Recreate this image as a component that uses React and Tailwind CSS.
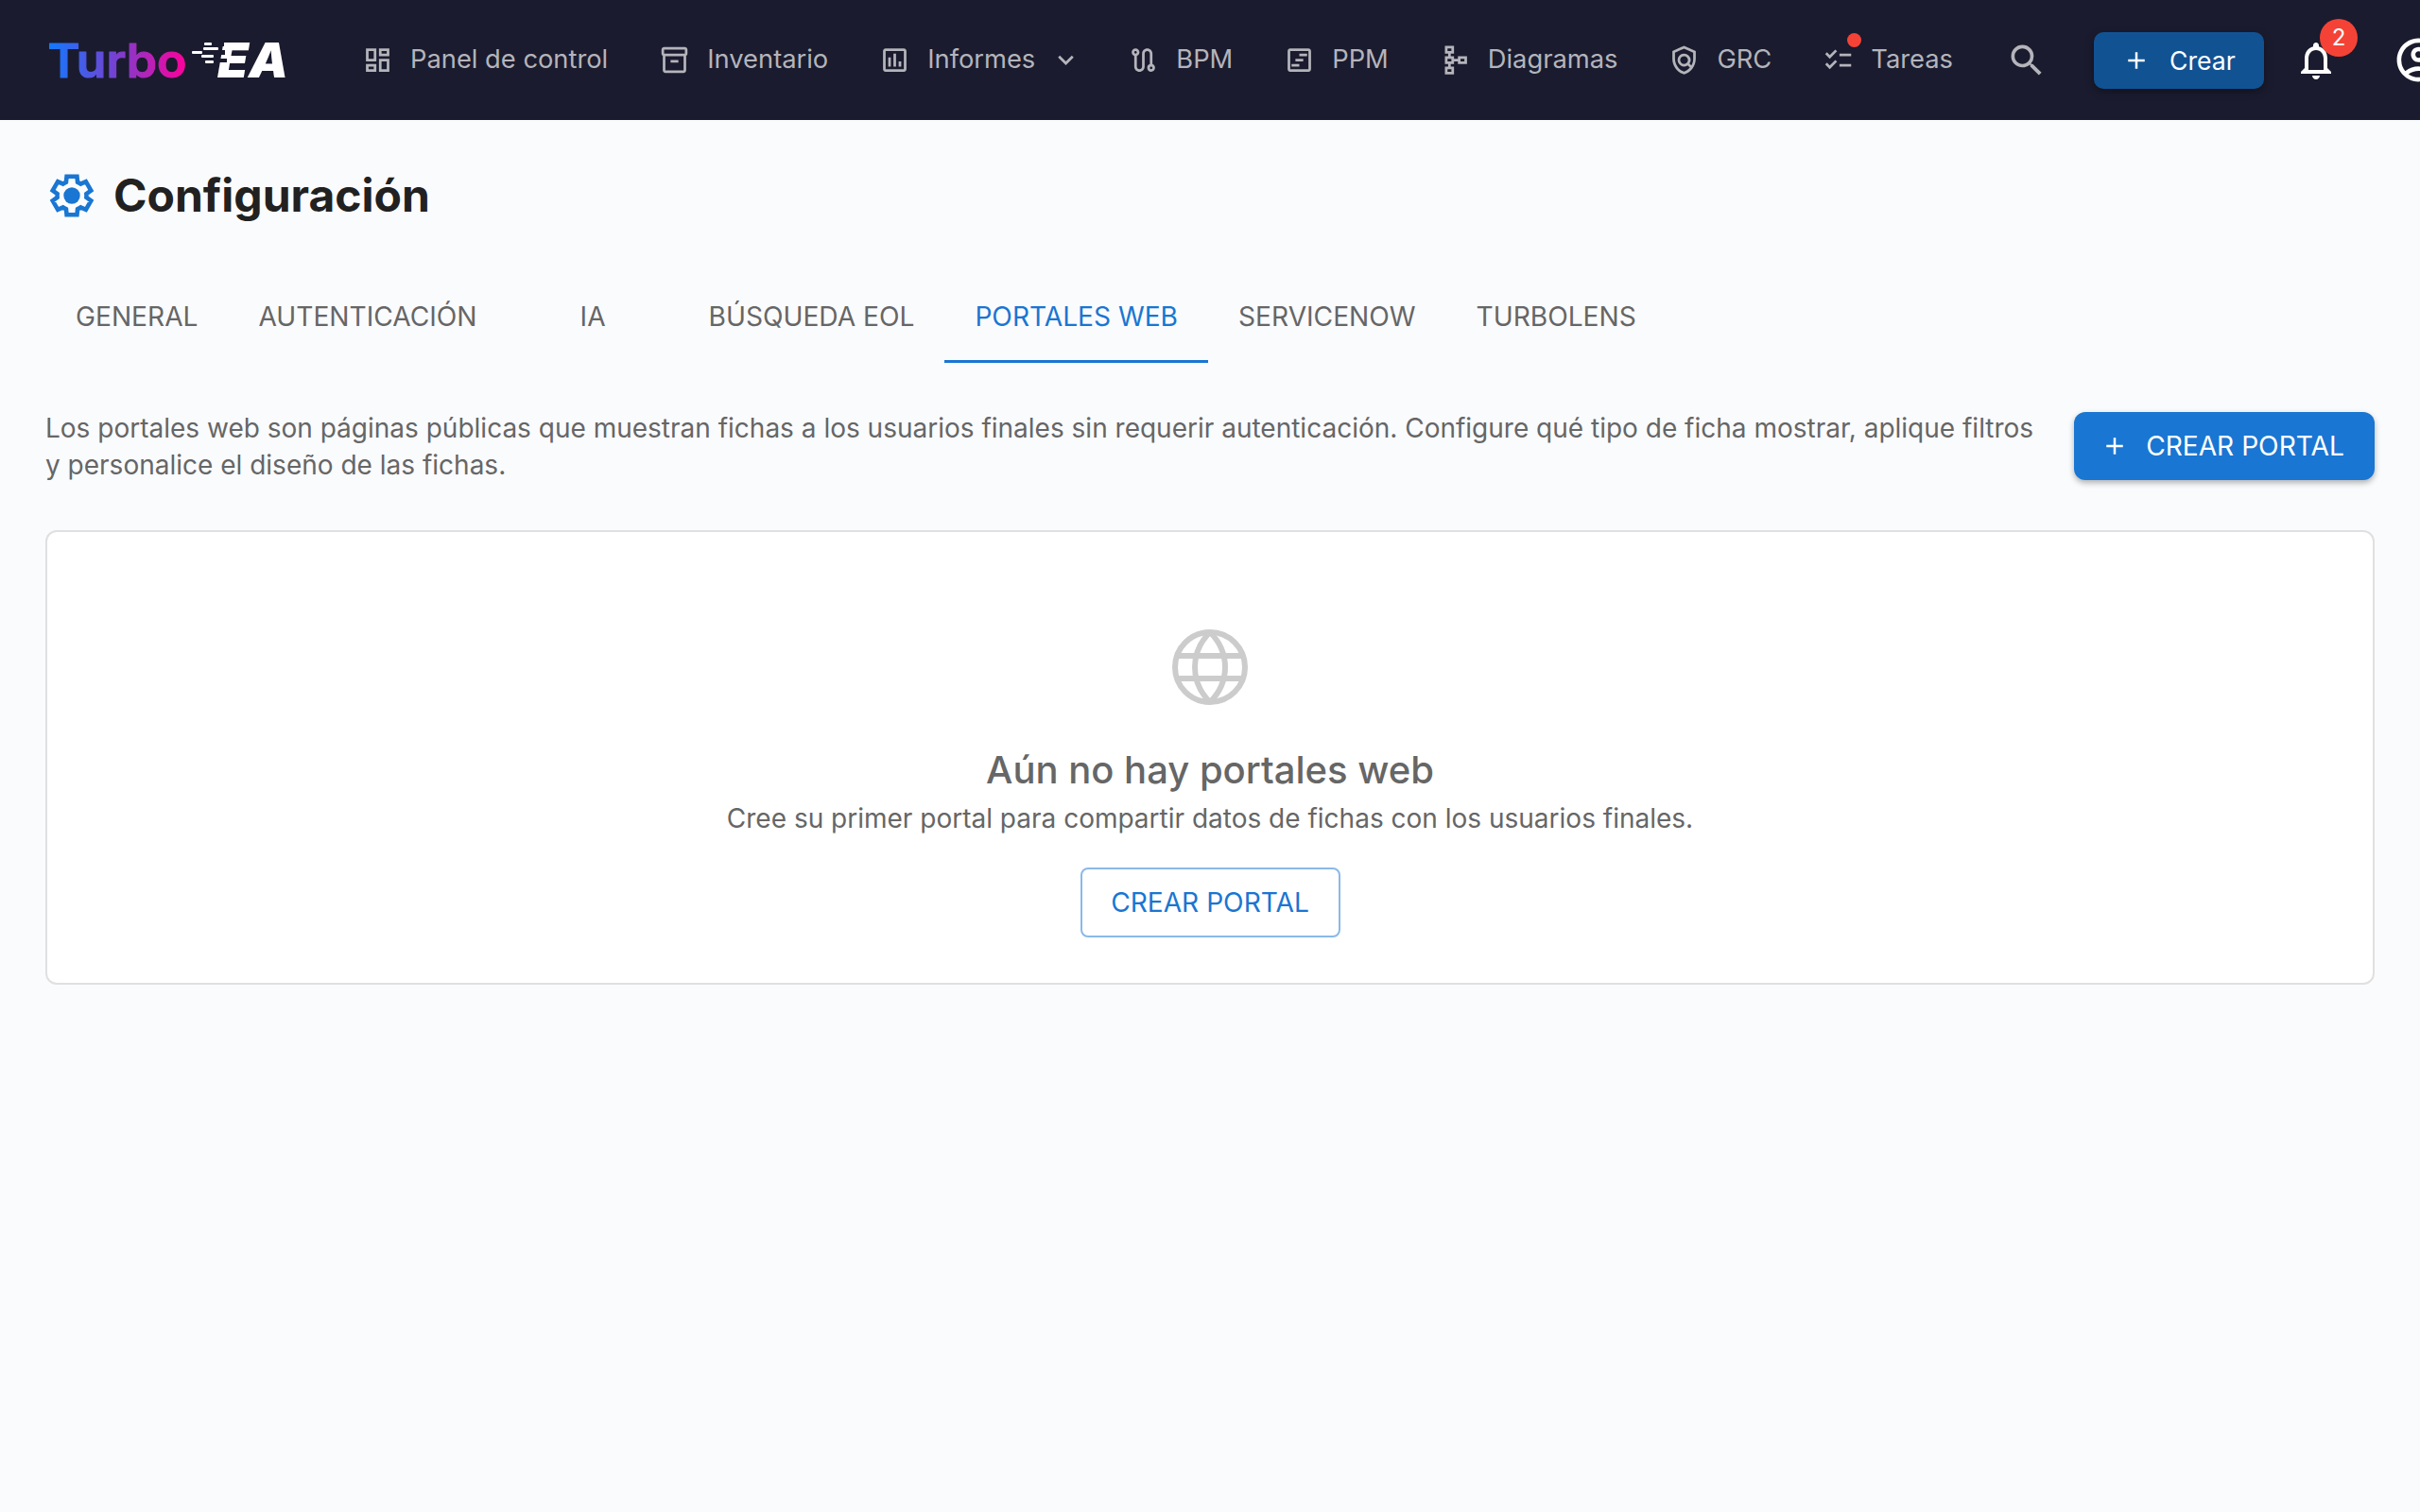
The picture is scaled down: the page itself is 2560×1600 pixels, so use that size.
import { MdOutlineDashboard, MdOutlineInventory2, MdOutlineAssessment, MdExpandMore, MdOutlineRoute, MdOutlineViewTimeline, MdOutlineSchema, MdOutlinePolicy, MdOutlineChecklist, MdSearch, MdAdd, MdOutlineNotifications, MdOutlineAccountCircle } from "react-icons/md";

const NAV_ITEMS = [
  { label: "Panel de control", icon: MdOutlineDashboard },
  { label: "Inventario", icon: MdOutlineInventory2 },
  { label: "Informes", icon: MdOutlineAssessment, caret: true },
  { label: "BPM", icon: MdOutlineRoute },
  { label: "PPM", icon: MdOutlineViewTimeline },
  { label: "Diagramas", icon: MdOutlineSchema },
  { label: "GRC", icon: MdOutlinePolicy },
  { label: "Tareas", icon: MdOutlineChecklist, dot: true },
];

const TABS = ["GENERAL", "AUTENTICACIÓN", "IA", "BÚSQUEDA EOL", "PORTALES WEB", "SERVICENOW", "TURBOLENS"];

const Logo = () => (
  <svg width="270" height="64" viewBox="0 0 270 64" className="shrink-0">
    <defs>
      <linearGradient id="turbo" gradientUnits="userSpaceOnUse" x1="0" x2="148" y1="0" y2="0">
        <stop offset="0" stopColor="#0f7bff" />
        <stop offset="0.5" stopColor="#7a3fd0" />
        <stop offset="1" stopColor="#ff0099" />
      </linearGradient>
    </defs>
    <text x="0.5" y="50" fontFamily="Inter" fontWeight="600" fontSize="50" fill="url(#turbo)" stroke="url(#turbo)" strokeWidth="1.2" strokeLinejoin="round" textLength="147" lengthAdjust="spacingAndGlyphs">Turbo</text>
    <text x="180" y="50" fontFamily="Inter" fontWeight="900" fontStyle="italic" fontSize="51" fill="#fff" textLength="75" lengthAdjust="spacingAndGlyphs">EA</text>
    {/* speed lines cut into the E */}
    <g fill="#1a1b2e">
      <rect x="176" y="12" width="11" height="5" />
      <rect x="176" y="21" width="12" height="5" />
      <rect x="176" y="30" width="14" height="4" />
    </g>
    <g fill="#fff">
      <rect x="153" y="22" width="11" height="3" rx="1" />
      <rect x="166" y="13" width="8" height="3" rx="1" />
      <rect x="165" y="18" width="16" height="3" rx="1" />
      <rect x="163" y="26" width="13" height="3" rx="1" />
      <rect x="167" y="32" width="9" height="3" rx="1" />
    </g>
  </svg>
);

// gear outline with a solid centre, the icon set's one has a ring instead
const gearPoints = [0, 1, 2, 3, 4, 5]
  .flatMap((k) => {
    const a = k * 60 - 90;
    return [
      [15.5, a - 30],
      [15.5, a - 23],
      [21, a - 15],
      [21, a + 15],
      [15.5, a + 23],
    ];
  })
  .map(([r, d]) => {
    const t = (d * Math.PI) / 180;
    return `${(24 + r * Math.cos(t)).toFixed(2)},${(24 + r * Math.sin(t)).toFixed(2)}`;
  })
  .join(" ");

const GearIcon = () => (
  <svg width="48" height="48" viewBox="0 0 48 48" className="shrink-0 ml-[4px]">
    <polygon points={gearPoints} fill="none" stroke="#1976d2" strokeWidth="4.6" />
    <circle cx="24" cy="24" r="8.7" fill="#1976d2" />
  </svg>
);

const GlobeIcon = () => (
  <svg width="80" height="80" viewBox="0 0 80 80" fill="none" stroke="#cccccc" strokeWidth="6" className="mt-[103px] shrink-0">
    <circle cx="40" cy="40" r="37" />
    <path d="M40 3C29 14 24 28 24 40s5 26 16 37M40 3c11 11 16 25 16 37S51 66 40 77" />
    <path d="M6 28h68M6 52h68" />
  </svg>
);

const NavItem = ({ item }) => {
  const Icon = item.icon;
  return (
    <div className="relative flex items-center gap-[18px] shrink-0 text-[27.3px] text-[#b4b4bb]">
      <Icon className="w-[33px] h-[33px] shrink-0" />
      <span className="whitespace-nowrap">{item.label}</span>
      {item.caret && <MdExpandMore className="w-[33px] h-[33px] -ml-[2px] -mr-[5px]" />}
      {item.dot && <span className="absolute left-[26px] top-[-8px] w-[15px] h-[15px] rounded-full bg-[#f44336]" />}
    </div>
  );
};

export default function App() {
  return (
    <div className="w-[2560px] h-[1600px] overflow-hidden bg-[#fafbfd] font-['Inter',sans-serif]">
      <header className="flex items-center h-[127px] bg-[#1a1b2e] pl-[50px] whitespace-nowrap">
        <Logo />
        <nav className="flex items-center gap-[54px] ml-[63px]">
          {NAV_ITEMS.map((item) => (
            <NavItem key={item.label} item={item} />
          ))}
        </nav>
        <MdSearch className="w-[44px] h-[44px] text-[#b4b4bb] ml-[56px] shrink-0" />
        <button className="flex items-center gap-[20px] pl-[30px] ml-[49px] w-[180px] h-[60px] rounded-[10px] bg-[#115293] text-white text-[26.6px] shadow-[0_3px_8px_rgba(0,0,0,0.35)] shrink-0">
          <MdAdd className="w-[30px] h-[30px]" />
          <span className="pt-[2px]">Crear</span>
        </button>
        <div className="relative ml-[31px] shrink-0">
          <MdOutlineNotifications className="w-[48px] h-[48px] text-white" />
          <span className="absolute -top-[20px] left-[28px] flex items-center justify-center w-[40px] h-[40px] rounded-full bg-[#f44336] text-white text-[24px]">2</span>
        </div>
        <MdOutlineAccountCircle className="w-[55px] h-[55px] text-white ml-[57px] shrink-0" />
      </header>

      <main className="px-[48px]">
        <div className="flex items-center gap-[20px] pt-[51px]">
          <GearIcon />
          <h1 className="text-[48px] leading-[58px] font-bold text-[#212121]">Configuración</h1>
        </div>

        <div className="flex mt-[52px] h-[96px]">
          {TABS.map((tab) => (
            <div
              key={tab}
              className={`flex items-center justify-center min-w-[181px] px-[32px] pt-[1px] border-b-[3px] text-[28.15px] ${
                tab === "PORTALES WEB" ? "text-[#1976d2] border-[#1976d2]" : "text-[#666666] border-transparent"
              }`}
            >
              {tab}
            </div>
          ))}
        </div>

        <div className="flex items-start gap-[42px] mt-[48px]">
          <p className="flex-1 pt-[2px] text-[28px] leading-[39px] text-[#666666]">
            Los portales web son páginas públicas que muestran fichas a los usuarios finales sin requerir autenticación. Configure qué tipo de ficha mostrar, aplique filtros y personalice el diseño de las fichas.
          </p>
          <button className="flex items-center justify-center gap-[18px] pr-[4px] mt-[4px] w-[318px] h-[72px] rounded-[12px] bg-[#1976d2] text-white text-[28.15px] shadow-[0_3px_6px_rgba(0,0,0,0.3)] shrink-0">
            <MdAdd className="w-[30px] h-[30px]" />
            CREAR PORTAL
          </button>
        </div>

        <div className="flex flex-col items-center mt-[49px] h-[481px] bg-white border-2 border-[#e0e0e0] rounded-[12px]">
          <GlobeIcon />
          <h2 className="mt-[45px] text-[40px] leading-[48px] font-medium text-[#666666]">Aún no hay portales web</h2>
          <p className="mt-[7px] text-[28px] leading-[40px] text-[#666666]">Cree su primer portal para compartir datos de fichas con los usuarios finales.</p>
          <button className="mt-[32px] w-[275px] h-[74px] rounded-[8px] border-2 border-[#8bb9e8] text-[#1976d2] text-[28.15px]">
            CREAR PORTAL
          </button>
        </div>
      </main>
    </div>
  );
}
